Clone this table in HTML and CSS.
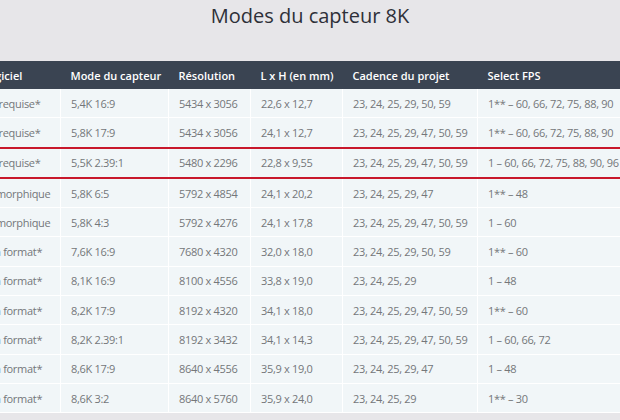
FILE: index.html
```html
<!DOCTYPE html>
<html lang="fr">
<head>
  <meta charset="UTF-8">
  <title>Modes du capteur 8K</title>
  <link rel="stylesheet" href="styles.css">
</head>
<body>
  <h1 class="title">Modes du capteur 8K</h1>

  <div class="table-wrap">
    <table class="modes">
      <colgroup>
        <col class="c-soft">
        <col class="c-mode">
        <col class="c-res">
        <col class="c-size">
        <col class="c-rate">
        <col class="c-fps">
      </colgroup>
      <thead>
        <tr>
          <th>Logiciel</th>
          <th>Mode du capteur</th>
          <th>Résolution</th>
          <th>L x H (en mm)</th>
          <th>Cadence du projet</th>
          <th>Select FPS</th>
        </tr>
      </thead>
      <tbody>
        <tr>
          <td>MAJ requise*</td>
          <td>5,4K 16:9</td>
          <td>5434 x 3056</td>
          <td>22,6 x 12,7</td>
          <td>23, 24, 25, 29, 50, 59</td>
          <td>1** – 60, 66, 72, 75, 88, 90</td>
        </tr>
        <tr>
          <td>MAJ requise*</td>
          <td>5,8K 17:9</td>
          <td>5434 x 3056</td>
          <td>24,1 x 12,7</td>
          <td>23, 24, 25, 29, 47, 50, 59</td>
          <td>1** – 60, 66, 72, 75, 88, 90</td>
        </tr>
        <tr class="highlight">
          <td>MAJ requise*</td>
          <td>5,5K 2.39:1</td>
          <td>5480 x 2296</td>
          <td>22,8 x 9,55</td>
          <td>23, 24, 25, 29, 47, 50, 59</td>
          <td>1 – 60, 66, 72, 75, 88, 90, 96</td>
        </tr>
        <tr>
          <td>Anamorphique</td>
          <td>5,8K 6:5</td>
          <td>5792 x 4854</td>
          <td>24,1 x 20,2</td>
          <td>23, 24, 25, 29, 47</td>
          <td>1** – 48</td>
        </tr>
        <tr>
          <td>Anamorphique</td>
          <td>5,8K 4:3</td>
          <td>5792 x 4276</td>
          <td>24,1 x 17,8</td>
          <td>23, 24, 25, 29, 47, 50, 59</td>
          <td>1 – 60</td>
        </tr>
        <tr>
          <td>Plein format*</td>
          <td>7,6K 16:9</td>
          <td>7680 x 4320</td>
          <td>32,0 x 18,0</td>
          <td>23, 24, 25, 29, 50, 59</td>
          <td>1** – 60</td>
        </tr>
        <tr>
          <td>Plein format*</td>
          <td>8,1K 16:9</td>
          <td>8100 x 4556</td>
          <td>33,8 x 19,0</td>
          <td>23, 24, 25, 29</td>
          <td>1 – 48</td>
        </tr>
        <tr>
          <td>Plein format*</td>
          <td>8,2K 17:9</td>
          <td>8192 x 4320</td>
          <td>34,1 x 18,0</td>
          <td>23, 24, 25, 29, 47, 50, 59</td>
          <td>1** – 60</td>
        </tr>
        <tr>
          <td>Plein format*</td>
          <td>8,2K 2.39:1</td>
          <td>8192 x 3432</td>
          <td>34,1 x 14,3</td>
          <td>23, 24, 25, 29, 47, 50, 59</td>
          <td>1 – 60, 66, 72</td>
        </tr>
        <tr>
          <td>Plein format*</td>
          <td>8,6K 17:9</td>
          <td>8640 x 4556</td>
          <td>35,9 x 19,0</td>
          <td>23, 24, 25, 29, 47</td>
          <td>1 – 48</td>
        </tr>
        <tr>
          <td>Plein format*</td>
          <td>8,6K 3:2</td>
          <td>8640 x 5760</td>
          <td>35,9 x 24,0</td>
          <td>23, 24, 25, 29</td>
          <td>1** – 30</td>
        </tr>
      </tbody>
    </table>
  </div>
</body>
</html>
```

FILE: styles.css
```css
body {margin:0; padding:0; background:#e7e6e9; font-family:"Open Sans", "Noto Sans", sans-serif; color:#333;}
.title {margin:0; padding-top:3px; height:58px; text-align:center; font-size:20px; font-weight:500; color:#2e3038; line-height:26px;}

/* table is wider than the window, clipped on both sides */
.table-wrap {width:620px; overflow:hidden;}
.modes {margin-left:-34px; width:671px; table-layout:fixed; border-collapse:collapse; font-size:11px;}
.c-soft {width:94px;}
.c-mode {width:108px;}
.c-res {width:82px;}
.c-size {width:92px;}
.c-rate {width:135px;}
.c-fps {width:160px;}

.modes th {background:#3a4452; color:#fff; font-weight:600; text-align:left; padding:0 10px; height:28px; white-space:nowrap;}
.modes th:first-child {padding-left:16px;}
.modes td {background:#f1f6f8; color:#74777a; padding:0 10px; height:28.3px; border:1px solid #fff; white-space:nowrap; letter-spacing:-0.3px;}
.modes tbody tr:first-child td {border-top:0;}
.modes tr.highlight td {border-top:2px solid #c8182b; border-bottom:2px solid #c8182b;}
```
